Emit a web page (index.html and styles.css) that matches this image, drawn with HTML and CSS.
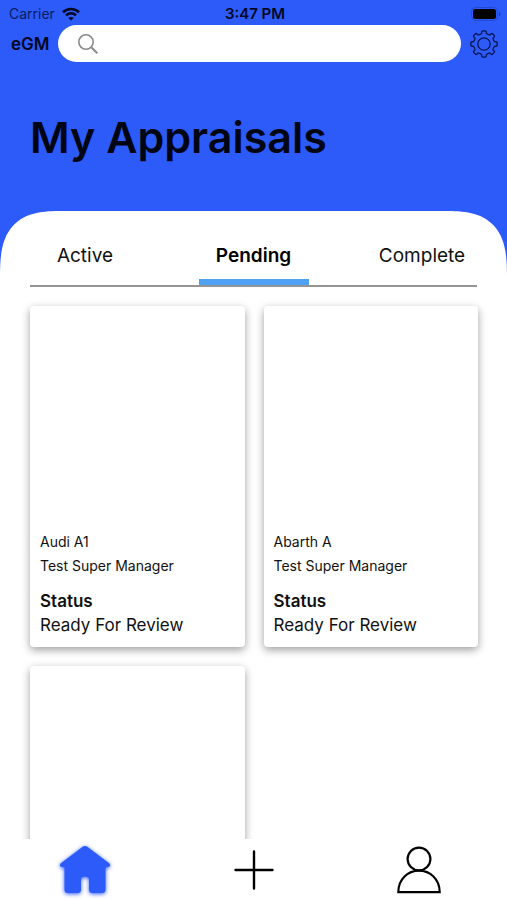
FILE: index.html
```html
<!DOCTYPE html>
<html lang="en">
<head>
<meta charset="utf-8">
<meta name="viewport" content="width=device-width, initial-scale=1">
<title>My Appraisals</title>
<link rel="stylesheet" href="styles.css">
</head>
<body>
<div class="app">
  <div class="status-bar">
    <div class="carrier">
      <span>Carrier</span>
      <svg width="18" height="14" viewBox="0 0 18 14" fill="none" stroke="#00071f" stroke-width="2.6" aria-hidden="true">
        <path d="M1 5.2C5.500 .9 12.500 .9 17 5.200M4 8.400C6.900 5.700 11.100 5.700 14 8.400"/>
        <path d="M9 13.600L6.300 10.900C7.900 9.600 10.100 9.600 11.700 10.900Z" fill="#00071f" stroke="none"/>
      </svg>
    </div>
    <span class="clock">3:47 PM</span>
    <div class="battery">
      <svg width="30" height="14" viewBox="0 0 30 14" aria-hidden="true">
        <rect x=".5" y=".5" width="26" height="13" rx="4" fill="none" stroke="#2448d0"/>
        <rect x="2" y="2" width="23" height="10" rx="2.500" fill="#000"/>
        <path d="M28 5C29.700 5.500 29.700 8.500 28 9Z" fill="#1c379f"/>
      </svg>
    </div>
  </div>
  <header class="top-row">
    <span class="brand">eGM</span>
    <label class="search">
      <svg width="20" height="20" viewBox="0 0 20 20" fill="none" stroke="#8a8a8a" stroke-width="1.600" aria-hidden="true">
        <circle cx="8" cy="8" r="7.200"/>
        <path d="M13 13L19.300 19.300" stroke-width="2"/>
      </svg>
      <input type="search" aria-label="Search appraisals">
    </label>
    <button class="settings" aria-label="Settings">
      <svg width="28" height="28" viewBox="-14 -14 28 28" fill="none" stroke="#07164f" stroke-width="1.300" stroke-linejoin="round" aria-hidden="true">
        <path d="M-2 -12.900Q0 -13.500 2 -12.900L2.500 -10.400Q4.200 -9 5.800 -9.100L7.700 -10.600Q9.600 -9.600 10.600 -7.700L9.100 -5.800Q9 -4.200 10.400 -2.500L12.900 -2Q13.500 0 12.900 2L10.400 2.500Q9 4.200 9.100 5.800L10.600 7.700Q9.600 9.600 7.700 10.600L5.800 9.100Q4.200 9 2.500 10.400L2 12.900Q0 13.500 -2 12.900L-2.500 10.400Q-4.200 9 -5.800 9.100L-7.700 10.600Q-9.600 9.600 -10.600 7.700L-9.100 5.800Q-9 4.200 -10.400 2.500L-12.900 2Q-13.500 0 -12.900 -2L-10.400 -2.500Q-9 -4.200 -9.100 -5.800L-10.600 -7.700Q-9.600 -9.600 -7.700 -10.600L-5.800 -9.100Q-4.200 -9 -2.500 -10.400Z"/>
        <circle r="6.200"/>
      </svg>
    </button>
  </header>
  <h1>My Appraisals</h1>
  <main class="panel">
    <div class="tabs" role="tablist">
      <button class="tab" role="tab" aria-selected="false">Active</button>
      <button class="tab selected" role="tab" aria-selected="true">Pending</button>
      <button class="tab" role="tab" aria-selected="false">Complete</button>
    </div>
    <div class="cards">
      <article class="card">
        <div class="photo"></div>
        <p class="detail">Audi A1</p>
        <p class="detail">Test Super Manager</p>
        <h2>Status</h2>
        <p class="state">Ready For Review</p>
      </article>
      <article class="card">
        <div class="photo"></div>
        <p class="detail">Abarth A</p>
        <p class="detail">Test Super Manager</p>
        <h2>Status</h2>
        <p class="state">Ready For Review</p>
      </article>
      <article class="card">
        <div class="photo"></div>
      </article>
    </div>
  </main>
  <nav class="nav">
    <a href="#home" aria-label="Home">
      <svg class="home" width="52" height="50" viewBox="0 0 52 50" fill="#2c5bfa" aria-hidden="true">
        <path d="M24 1.600Q26 .2 28 1.600L50.500 18.500Q52 20.500 50.500 21.500L46.500 22.500V44.500Q46.500 48 43 48H33.500Q30 48 30 44.500V34Q30 31.500 26 31.500T22 34V44.500Q22 48 18.500 48H9Q5.500 48 5.500 44.500V22.500L1.500 21.500Q0 20.500 1.500 18.500Z"/>
      </svg>
    </a>
    <a href="#add" aria-label="Add appraisal">
      <svg width="40" height="40" viewBox="0 0 40 40" stroke="#000" stroke-width="2.400" stroke-linecap="round" aria-hidden="true">
        <path d="M20 1.500V38.500M1.500 20H38.500"/>
      </svg>
    </a>
    <a href="#profile" aria-label="Profile">
      <svg width="44" height="48" viewBox="0 0 44 48" fill="none" stroke="#000" stroke-width="2.200" aria-hidden="true">
        <circle cx="22" cy="13" r="11.400"/>
        <path d="M1.300 46.200C1.300 33 11 24.600 22 24.600S42.700 33 42.700 46.200Z"/>
      </svg>
    </a>
  </nav>
</div>
</body>
</html>
```
FILE: styles.css
```css
* {
  box-sizing: border-box;
}

body {
  margin: 0;
  font-family: Inter, "Liberation Sans", sans-serif;
  color: #111;
}

h1,
h2,
p {
  margin: 0;
}

button {
  padding: 0;
  border: 0;
  background: none;
  font: inherit;
  color: inherit;
}

svg {
  display: block;
}

.app {
  display: flex;
  flex-direction: column;
  height: 100vh;
  background: #2c5bfa;
}

.status-bar {
  display: grid;
  grid-template-columns: 1fr auto 1fr;
  align-items: center;
  height: 25px;
  padding: 2px 6px 0 9px;
  font-size: 14px;
  color: #00071f;
}

.carrier {
  display: flex;
  align-items: center;
  gap: 7px;
  color: #0b1c60;
}

.clock {
  font-size: 15px;
  font-weight: 600;
}

.battery {
  justify-self: end;
}

.top-row {
  display: flex;
  align-items: center;
  gap: 9px;
  padding: 0 9px 0 11px;
}

.brand {
  font-size: 17px;
  font-weight: 600;
  color: #00071f;
}

.search {
  display: flex;
  flex: 1;
  align-items: center;
  gap: 10px;
  min-width: 0;
  height: 37px;
  padding: 0 20px;
  border-radius: 19px;
  background: #fff;
}

.search input {
  flex: 1;
  min-width: 0;
  border: 0;
  outline: 0;
  background: none;
  font: inherit;
}

h1 {
  padding: 49px 30px 47px;
  font-size: 43px;
  font-weight: 600;
  line-height: 53px;
  color: #000513;
}

.panel {
  display: flex;
  flex: 1;
  flex-direction: column;
  min-height: 0;
  border-radius: 48px 48px 0 0 / 56px 56px 0 0;
  background: #fff;
}

@supports (corner-shape: superellipse(1.5)) {
  .panel {
    border-radius: 62px 62px 0 0 / 66px 66px 0 0;
    corner-shape: superellipse(1.5);
  }
}

.tabs {
  display: flex;
  justify-content: space-between;
  flex: none;
  height: 76px;
  margin: 0 30px;
  border-bottom: 2px solid #949494;
}

.tab {
  width: 110px;
  padding-top: 20px;
  border-bottom: 6px solid transparent;
  font-size: 19px;
}

.tab.selected {
  border-bottom-color: #4ea2f5;
  font-weight: 600;
  color: #000;
}

.cards {
  display: grid;
  grid-template-columns: 1fr 1fr;
  align-content: start;
  gap: 19px;
  flex: 1;
  min-height: 0;
  padding: 19px 29px 19px 30px;
  overflow: auto;
  scrollbar-width: none;
}

.card {
  padding: 0 10px 9px;
  border-radius: 4px;
  background: #fff;
  box-shadow: 0 3px 9px rgb(0 0 0 / 38%);
}

.photo {
  height: 224px;
}

.detail {
  font-size: 14px;
  line-height: 24px;
}

.card h2 {
  padding-top: 11px;
  font-size: 17px;
  font-weight: 600;
  line-height: 24px;
}

.state {
  font-size: 17px;
  line-height: 25px;
}

.nav {
  display: flex;
  align-items: center;
  justify-content: space-between;
  flex: none;
  height: 61px;
  padding: 0 66px 0 59px;
  background: #fff;
}

.home {
  overflow: visible;
  filter: drop-shadow(0 1px 2px #2c5bfa);
}
```
